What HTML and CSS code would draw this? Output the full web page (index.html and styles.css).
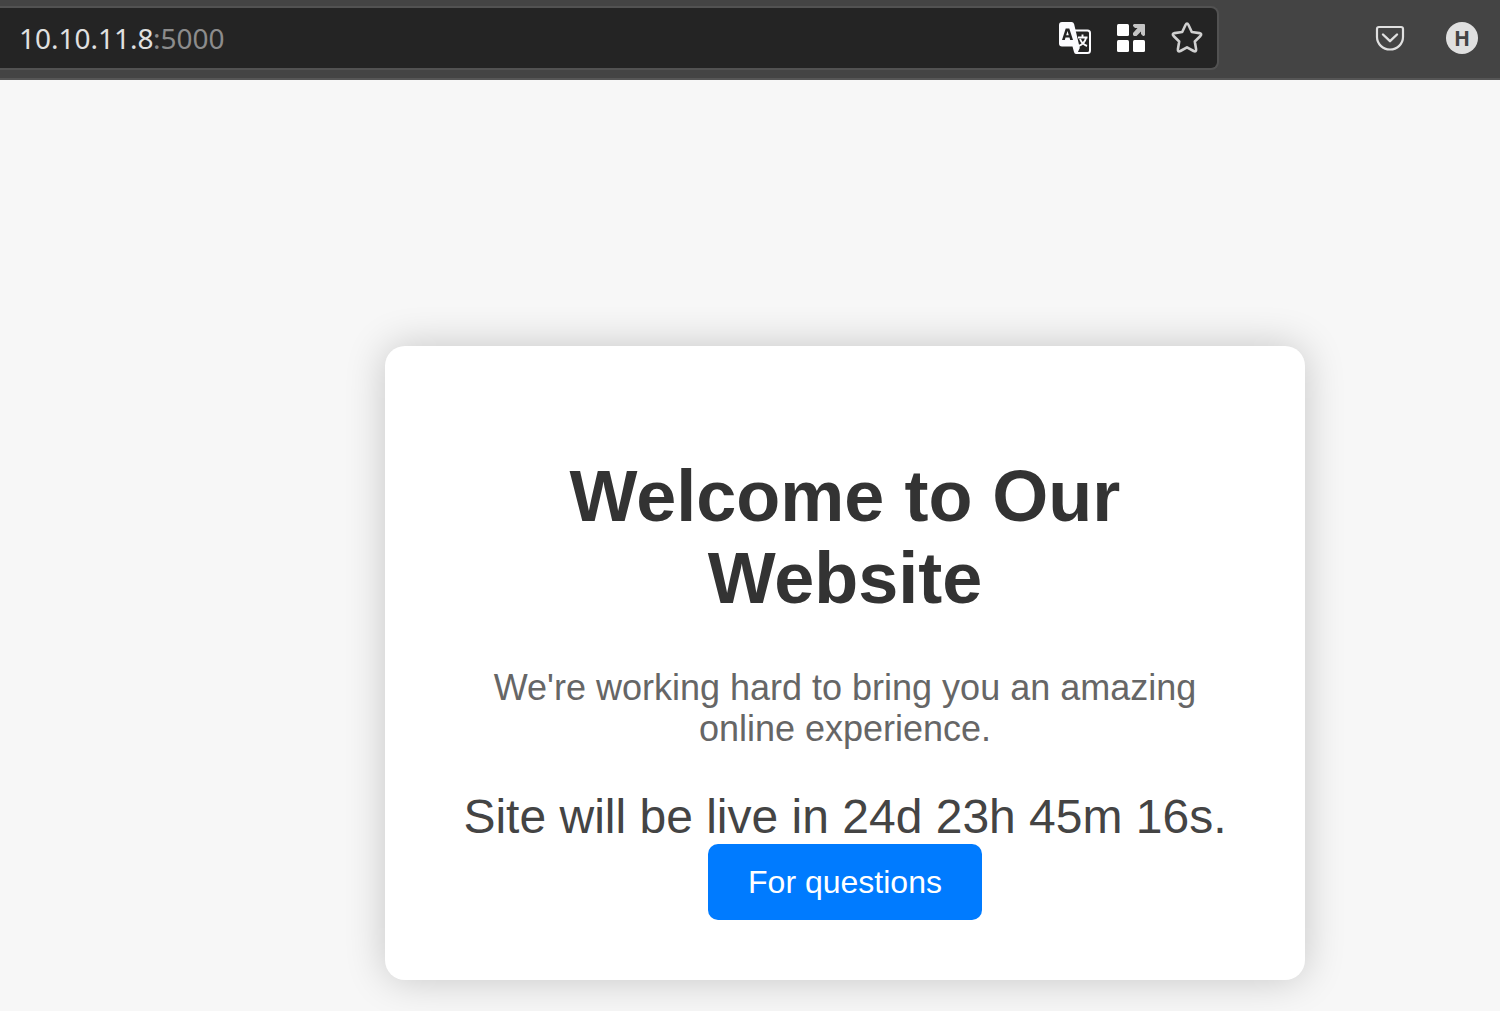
FILE: index.html
```html
<!DOCTYPE html>
<html lang="en">
<head>
    <meta charset="UTF-8">
    <meta name="viewport" content="width=device-width, initial-scale=1.0">
    <title>Under Construction</title>
    <link rel="stylesheet" href="styles.css">
</head>
<body>
    <header class="toolbar">
        <div class="url-bar">
            <div class="address">
                <input class="host" type="text" value="10.10.11.8" aria-label="Address">
                <span class="port">:5000</span>
            </div>
            <button class="icon-button" type="button" aria-label="Translate page">
                <svg width="32" height="32" viewBox="0 0 32 32">
                    <path d="M14 8.500h14.500q2.500 0 2.500 2.500v17.500q0 2.500-2.500 2.500H18" fill="none" stroke="#fbfbfe" stroke-width="2"/>
                    <path d="M3 0h9.500q2 0 2.600 2l5.700 24-2.800 6h-1q-1.500 0-2-2l-1.500-5.500H3q-3 0-3-3V3q0-3 3-3z" fill="#fbfbfe"/>
                    <path d="M3 18L6.700 6.500h3.600L14 18h-2.800l-.7-2.500h-4L5.800 18zM7.200 13.200h2.600L8.500 9z" fill="#242424"/>
                    <path d="M19 15.500h9.500M23.500 12.500v3M27 16q-1.500 6-7.500 8M21 17q2 5 7 7" fill="none" stroke="#fbfbfe" stroke-width="1.900"/>
                </svg>
            </button>
            <button class="icon-button" type="button" aria-label="Extensions">
                <svg width="32" height="32" viewBox="0 0 32 32">
                    <g fill="#fff">
                        <rect x="2" y="2" width="12" height="12" rx="1.500"/>
                        <rect x="2" y="18" width="12" height="12" rx="1.500"/>
                        <rect x="18" y="18" width="12" height="12" rx="1.500"/>
                    </g>
                    <path d="M19 2h10q1 0 1 1v10l-1 1h-1l-2-2V9.500L21.500 14H19l-1-1v-2L22.500 6H20l-2-2V3z" fill="#c4c4c4"/>
                </svg>
            </button>
            <button class="icon-button" type="button" aria-label="Bookmark this page">
                <svg width="32" height="32" viewBox="0 0 32 32">
                    <path d="M14.500 3q1.500-3 3 0l3.300 7 7.600 1.100q3 .6 1 2.900l-5.600 5.500 1.300 7.700q.3 3-2.500 1.800L16 25.300 9.400 29q-2.800 1.200-2.500-1.800l1.300-7.700L2.600 14q-2-2.300 1-2.900l7.600-1.100z" fill="none" stroke="#d0d0d0" stroke-width="2.600" stroke-linejoin="round"/>
                </svg>
            </button>
        </div>
        <div class="actions">
            <button class="icon-button" type="button" aria-label="Save to Pocket">
                <svg width="32" height="32" viewBox="0 0 32 32">
                    <path d="M5 5h22q2 0 2 2v8a13 12.500 0 0 1-26 0V7q0-2 2-2z" fill="none" stroke="#e0e0e0" stroke-width="2.200"/>
                    <path d="M9 12.500l7 6.700 7-6.700" fill="none" stroke="#e0e0e0" stroke-width="2.400" stroke-linecap="round" stroke-linejoin="round"/>
                </svg>
            </button>
            <button class="account" type="button" aria-label="Account H">H</button>
        </div>
    </header>

    <main class="page">
        <div class="container">
            <h1>Welcome to Our Website</h1>
            <p>We're working hard to bring you an amazing online experience.</p>
            <div class="countdown">Site will be live in 24d 23h 45m 16s.</div>
            <button class="support-button" type="button">For questions</button>
        </div>
    </main>
</body>
</html>
```

FILE: styles.css
```css
* {
    box-sizing: border-box;
}
body {
    margin: 0;
    font-family: "Liberation Sans", Arial, sans-serif;
    background-color: #f7f7f7;
}
button {
    font-family: inherit;
    cursor: pointer;
}
.toolbar {
    display: flex;
    align-items: flex-start;
    justify-content: space-between;
    height: 80px;
    padding: 6px 22px 0 0;
    background-color: #444;
    border-bottom: 2px solid #565656;
}
.url-bar {
    display: flex;
    align-items: center;
    gap: 24px;
    flex-grow: 1;
    height: 64px;
    padding: 0 14px 0 19px;
    background-color: #242424;
    border: 2px solid #525252;
    border-left: none;
    border-radius: 0 8px 8px 0;
}
.address {
    display: flex;
    align-items: center;
    flex-grow: 1;
    font-family: "Noto Sans", sans-serif;
    font-size: 28px;
    line-height: 40px;
}
.host {
    width: 134px;
    padding: 0;
    border: none;
    outline: none;
    background: none;
    color: #e0e0e0;
    font: inherit;
}
.port {
    color: #8c8c8c;
}
.icon-button {
    width: 32px;
    height: 32px;
    padding: 0;
    border: none;
    background: none;
}
.icon-button svg {
    display: block;
}
.actions {
    display: flex;
    align-items: center;
    gap: 40px;
    height: 64px;
    margin-left: 155px;
}
.account {
    width: 32px;
    height: 32px;
    padding: 0;
    border: none;
    border-radius: 50%;
    background-color: #e0e0e0;
    color: #444;
    font-family: "Noto Sans", sans-serif;
    font-size: 21px;
    font-weight: bold;
    line-height: 32px;
    text-align: center;
}
.page {
    display: flex;
    justify-content: center;
    padding: 266px 0 31px 190px;
}
.container {
    width: 100%;
    max-width: 920px;
    padding: 60px;
    background-color: #fff;
    border-radius: 20px;
    box-shadow: 0 0 40px rgba(0, 0, 0, 0.2);
    text-align: center;
}
h1 {
    margin: 49px 0 48px;
    color: #333;
    font-size: 72px;
    line-height: 82px;
}
p {
    margin: 0 0 40px;
    color: #666;
    font-size: 36px;
    line-height: 41px;
}
.countdown {
    color: #444;
    font-size: 48px;
    line-height: 55px;
}
.support-button {
    padding: 20px 40px;
    border: none;
    border-radius: 10px;
    background-color: #007bff;
    color: #fff;
    font-size: 32px;
    line-height: 36px;
    vertical-align: top;
}
```
